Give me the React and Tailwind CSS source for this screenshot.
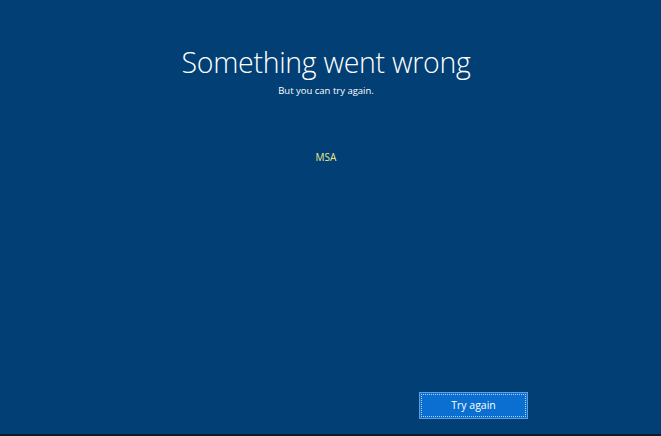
import React from "react";

const Screen = () => {
  return (
    <div className="w-[661px] h-[436px] bg-[#023f74] flex flex-col overflow-hidden font-['Open_Sans',sans-serif] border-b-2 border-[#0d1c2a]">
      <div className="flex flex-col items-center pr-[9px]">
        <h1 className="mt-[42px] text-[28.5px] leading-[40px] font-light text-white tracking-[-0.3px]">
          Something went wrong
        </h1>
        <p className="mt-[2px] text-[9.5px] leading-[14px] text-white">But you can try again.</p>
        <p className="mt-[52px] text-[10px] leading-[14px] text-[#e8e88a]">MSA</p>
      </div>
      <div className="flex-1" />
      <div className="flex justify-end pr-[133px] mb-[15px]">
        <button
          type="button"
          className="w-[109px] h-[27px] bg-[#0a6fd0] border border-[#5d9fe0] outline outline-1 outline-dotted outline-white/70 -outline-offset-[3px] text-white text-[10.5px]"
        >
          Try again
        </button>
      </div>
    </div>
  );
};

export default function App() {
  return <Screen />;
}
